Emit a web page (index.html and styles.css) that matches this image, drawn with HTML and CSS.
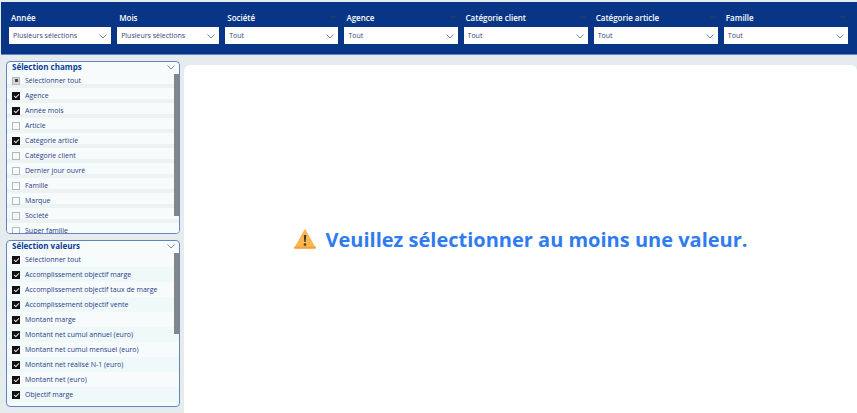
FILE: index.html
```html
<!DOCTYPE html>
<html lang="fr">
<head>
  <meta charset="UTF-8" />
  <meta name="viewport" content="width=device-width, initial-scale=1.0"/>
  <title>Rapport des ventes</title>
  <link rel="stylesheet" href="styles.css">
</head>
<body>

  <svg class="defs" width="0" height="0" aria-hidden="true">
    <symbol id="chevron" viewBox="0 0 8 5">
      <path d="M0.5 0.5 L4 4 L7.5 0.5" fill="none" stroke="currentColor" stroke-width="1"/>
    </symbol>
  </svg>

  <header class="filters">
    <div class="filter">
      <label for="annee">Année</label>
      <div class="select-box">
        <select id="annee"><option>Plusieurs sélections</option></select>
        <svg class="chevron"><use href="#chevron"/></svg>
      </div>
    </div>
    <div class="filter">
      <label for="mois">Mois</label>
      <div class="select-box">
        <select id="mois"><option>Plusieurs sélections</option></select>
        <svg class="chevron"><use href="#chevron"/></svg>
      </div>
    </div>
    <div class="filter clearable">
      <label for="societe">Société</label>
      <div class="select-box">
        <select id="societe"><option>Tout</option></select>
        <svg class="chevron"><use href="#chevron"/></svg>
      </div>
    </div>
    <div class="filter clearable">
      <label for="agence">Agence</label>
      <div class="select-box">
        <select id="agence"><option>Tout</option></select>
        <svg class="chevron"><use href="#chevron"/></svg>
      </div>
    </div>
    <div class="filter clearable">
      <label for="client">Catégorie client</label>
      <div class="select-box">
        <select id="client"><option>Tout</option></select>
        <svg class="chevron"><use href="#chevron"/></svg>
      </div>
    </div>
    <div class="filter clearable">
      <label for="article">Catégorie article</label>
      <div class="select-box">
        <select id="article"><option>Tout</option></select>
        <svg class="chevron"><use href="#chevron"/></svg>
      </div>
    </div>
    <div class="filter clearable">
      <label for="famille">Famille</label>
      <div class="select-box">
        <select id="famille"><option>Tout</option></select>
        <svg class="chevron"><use href="#chevron"/></svg>
      </div>
    </div>
  </header>

  <div class="content">
    <aside class="sidebar">
      <section class="panel fields">
        <div class="panel-head">
          <h2>Sélection champs</h2>
          <svg class="chevron"><use href="#chevron"/></svg>
        </div>
        <div class="list">
          <label><input type="checkbox" class="partial"> Sélectionner tout</label>
          <label><input type="checkbox" checked> Agence</label>
          <label><input type="checkbox" checked> Année mois</label>
          <label><input type="checkbox"> Article</label>
          <label><input type="checkbox" checked> Catégorie article</label>
          <label><input type="checkbox"> Catégorie client</label>
          <label><input type="checkbox"> Dernier jour ouvré</label>
          <label><input type="checkbox"> Famille</label>
          <label><input type="checkbox"> Marque</label>
          <label><input type="checkbox"> Société</label>
          <label><input type="checkbox"> Super famille</label>
        </div>
        <div class="thumb"></div>
      </section>

      <section class="panel values">
        <div class="panel-head">
          <h2>Sélection valeurs</h2>
          <svg class="chevron"><use href="#chevron"/></svg>
        </div>
        <div class="list">
          <label><input type="checkbox" checked> Sélectionner tout</label>
          <label><input type="checkbox" checked> Accomplissement objectif marge</label>
          <label><input type="checkbox" checked> Accomplissement objectif taux de marge</label>
          <label><input type="checkbox" checked> Accomplissement objectif vente</label>
          <label><input type="checkbox" checked> Montant marge</label>
          <label><input type="checkbox" checked> Montant net cumul annuel (euro)</label>
          <label><input type="checkbox" checked> Montant net cumul mensuel (euro)</label>
          <label><input type="checkbox" checked> Montant net réalisé N-1 (euro)</label>
          <label><input type="checkbox" checked> Montant net (euro)</label>
          <label><input type="checkbox" checked> Objectif marge</label>
          <label><input type="checkbox" checked></label>
        </div>
        <div class="thumb"></div>
      </section>
    </aside>

    <main class="report">
      <svg class="warning" viewBox="0 0 22 20" aria-hidden="true">
        <path d="M11 1 L21 19 H1 Z" fill="#fdb650" stroke="#fdb650" stroke-width="1.5" stroke-linejoin="round"/>
        <path d="M1 18.5 H21" stroke="#f5a13c" stroke-width="2" stroke-linecap="round"/>
        <path d="M9.8 6 H12.2 L11.7 13 H10.3 Z" fill="#43392f"/>
        <circle cx="11" cy="15.5" r="1.3" fill="#43392f"/>
      </svg>
      <p>Veuillez sélectionner au moins une valeur.</p>
    </main>
  </div>

</body>
</html>
```
FILE: styles.css
```css
* {
  box-sizing: border-box;
}
body {
  display: flex;
  flex-direction: column;
  height: 100vh;
  margin: 0;
  padding-top: 2px;
  background: #e6ebed;
  color: #1f3c88;
  font-family: "Open Sans", "Noto Sans", sans-serif;
  font-size: 7px;
  overflow: hidden;
}
.defs {
  position: absolute;
}
.filters {
  display: grid;
  grid-template-columns: 102fr 102fr 113fr 113fr 124fr 124fr 124fr;
  gap: 6px;
  padding: 10px 9px 10px 8px;
  margin-left: 1px;
  background: #083585;
  border-bottom: 1px solid #5b87d0;
}
.filter {
  position: relative;
  min-width: 0;
}
.filter label {
  display: block;
  padding-left: 2px;
  color: white;
  font-size: 8px;
  font-weight: 600;
  line-height: 12px;
  margin-bottom: 3px;
}
.clearable::after {
  content: "";
  position: absolute;
  top: 4px;
  right: 2px;
  width: 6px;
  height: 2px;
  background: #1d3a70;
}
.select-box {
  position: relative;
}
select {
  display: block;
  width: 100%;
  height: 17px;
  padding: 0 16px 0 4px;
  border: none;
  border-radius: 0;
  appearance: none;
  background: white;
  color: #33467c;
  font-family: inherit;
  font-size: 7px;
}
.chevron {
  width: 8px;
  height: 5px;
  color: #7a8699;
}
.select-box .chevron {
  position: absolute;
  top: 7px;
  right: 4px;
  pointer-events: none;
}
.content {
  display: flex;
  flex: 1;
  gap: 4px;
  min-height: 0;
}
.sidebar {
  display: grid;
  grid-template-rows: minmax(0, 173fr) minmax(0, 167fr);
  gap: 6px;
  width: 180px;
  padding: 6px 0 6px 6px;
}
.panel {
  position: relative;
  border: 1px solid #5f86c4;
  border-radius: 4px;
  background: #f7fbfc;
  overflow: hidden;
}
.panel-head {
  display: flex;
  align-items: center;
  justify-content: space-between;
  height: 10px;
  margin-bottom: 1px;
  padding: 0 4px 0 5px;
}
h2 {
  margin: 0;
  color: #0c3c96;
  font-size: 8px;
  font-weight: 700;
  line-height: 10px;
}
.list label {
  display: flex;
  align-items: center;
  gap: 5px;
  height: 15px;
  padding-left: 5px;
  line-height: 9px;
  white-space: nowrap;
}
.fields .list label {
  background: linear-gradient(#f7fbfc 11px, #edf2f3 11px);
}
.values .list label:nth-child(even) {
  background: #f0f9fa;
}
input {
  flex: none;
  display: grid;
  place-items: center;
  width: 8px;
  height: 8px;
  margin: 0;
  border: 1px solid #b3b8bb;
  appearance: none;
  background: #f7fbfc;
}
input:checked {
  border-color: #111;
  background: #111;
}
input:checked::after {
  content: "";
  width: 4px;
  height: 2px;
  border-left: 1px solid #ddd;
  border-bottom: 1px solid #ddd;
  transform: rotate(-45deg);
}
.partial {
  background: #d3d8da;
}
.partial::after {
  content: "";
  width: 3px;
  height: 3px;
  background: #444;
}
.thumb {
  position: absolute;
  top: 12px;
  right: 0;
  width: 5px;
  background: #858585;
}
.fields .thumb {
  height: 83%;
}
.values .thumb {
  height: 49%;
}
.report {
  display: flex;
  flex: 1;
  align-items: center;
  justify-content: center;
  gap: 10px;
  margin-top: 10px;
  border-radius: 6px 6px 0 0;
  background: white;
}
.warning {
  width: 22px;
  height: 20px;
}
.report p {
  margin: 0;
  color: #2f7bf0;
  font-size: 20px;
  font-weight: 700;
}
```
